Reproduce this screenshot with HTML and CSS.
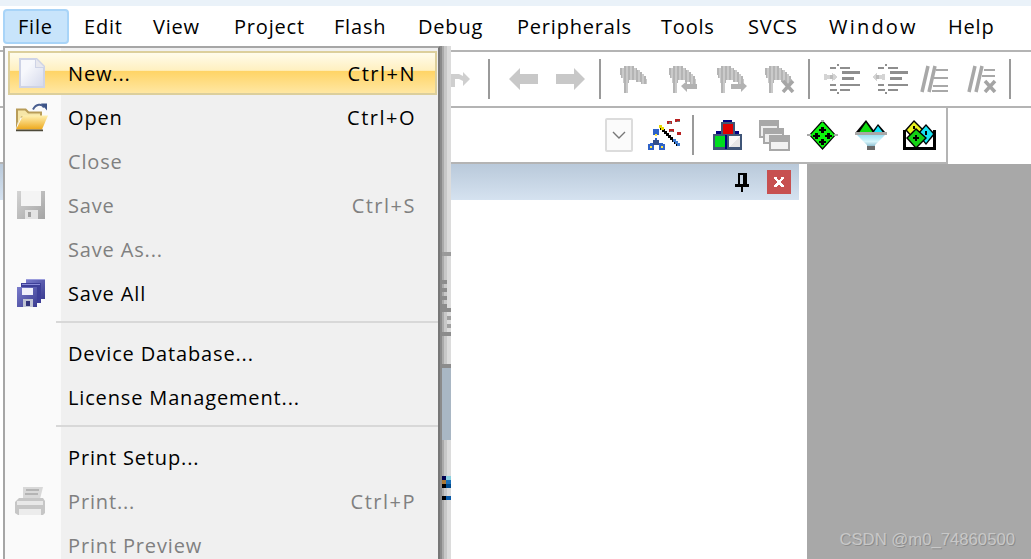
FILE: index.html
```html
<!DOCTYPE html>
<html lang="en">
<head>
<meta charset="utf-8">
<title>Keil File menu</title>
<link rel="stylesheet" href="styles.css">
</head>
<body>
<svg class="defs" width="0" height="0">
  <defs>
    <linearGradient id="pg" x1="0" y1="0" x2="1" y2="1"><stop offset=".3" stop-color="#f7f8fc"/><stop offset="1" stop-color="#d6daec"/></linearGradient>
    <linearGradient id="fd" x1="0" y1="0" x2="0" y2="1"><stop offset="0" stop-color="#fff0b0"/><stop offset="1" stop-color="#eda81c"/></linearGradient>
    <linearGradient id="fnl" x1="0" y1="0" x2="0" y2="1"><stop offset="0" stop-color="#9cdff2"/><stop offset=".6" stop-color="#d8f6fc"/><stop offset="1" stop-color="#8fc0d2"/></linearGradient>
    <linearGradient id="sv" x1="0" y1="0" x2="1" y2="1"><stop offset="0" stop-color="#d4d4d4"/><stop offset="1" stop-color="#a4a4a4"/></linearGradient>
    <linearGradient id="sa" x1="0" y1="0" x2="1" y2="1"><stop offset="0" stop-color="#7a7ccc"/><stop offset="1" stop-color="#3a3c90"/></linearGradient>
    <pattern id="dith" width="4" height="3" patternUnits="userSpaceOnUse"><rect width="4" height="3" fill="#cacaca"/><rect width="2" height="3" fill="#b4b4b4"/></pattern>
    <g id="flag"><path d="M0 3h4V1h10v2h3v2h3v2h2v2h2v2h2v3h1v5h-6v-2h-5v-2H9v3H8v10H4V18H3v-5H1v-3H0z" fill="url(#dith)" shape-rendering="crispEdges"/></g>
    <g id="lines1" fill="#8e8e8e"><path d="M15 0h2v2h-2zM8 3h6v2H8zM18 3h10v2H18zM20 7h18v3H20zM20 13h12v3H20zM8 20h6v2H8zM18 20h20v2H18zM8 25h7v2H8zM18 25h10v2H18zM15 28h2v2h-2z"/></g>
  </defs>
</svg>
<div class="app">
  <div class="strip"></div>
  <nav class="menubar">
    <span class="top active">File</span><span class="top">Edit</span><span class="top">View</span><span class="top">Project</span><span class="top">Flash</span><span class="top">Debug</span><span class="top">Peripherals</span><span class="top">Tools</span><span class="top">SVCS</span><span class="top wide">Window</span><span class="top">Help</span>
  </nav>
  <div class="bar1">
    <svg class="tb redo" width="22" height="24" viewBox="0 0 22 24"><path d="M0 7h9l4 2V5l7 7-7 7v-5l-4-2H5v8H1z" fill="#cfcfcf"/></svg>
    <i class="sep s1"></i>
    <svg class="tb back" width="29" height="24" viewBox="0 0 29 24"><path d="M0 12 11 1v6h18v10H11v6z" fill="#c8c8c8"/></svg>
    <svg class="tb fwd" width="29" height="24" viewBox="0 0 29 24"><path d="M29 12 18 1v6H0v10h18v6z" fill="#c8c8c8"/></svg>
    <i class="sep s2"></i>
    <svg class="tb f1" width="27" height="28" viewBox="0 0 27 28"><use href="#flag"/></svg>
    <svg class="tb f2" width="29" height="28" viewBox="0 0 29 28"><use href="#flag"/><path d="M12 21l6-5v3h10v5H18v3z" fill="#b2b2b2"/></svg>
    <svg class="tb f3" width="30" height="28" viewBox="0 0 30 28"><use href="#flag"/><path d="M30 21l-6-5v3H14v5h10v3z" fill="#b2b2b2"/></svg>
    <svg class="tb f4" width="30" height="28" viewBox="0 0 30 28"><use href="#flag"/><path d="M18 16l10 11m0-11L18 27" stroke="#a6a6a6" stroke-width="3.500"/></svg>
    <i class="sep s3"></i>
    <svg class="tb i1" width="38" height="30" viewBox="0 0 38 30" shape-rendering="crispEdges"><use href="#lines1"/><path d="M2 10h3v1h5V9l2 1 3 3-3 3-2 1v-2H5v1H2z" fill="#d4d4d4"/><path d="M8 11h3v4H8z" fill="#bcbcbc"/></svg>
    <svg class="tb i2" width="38" height="30" viewBox="0 0 38 30" shape-rendering="crispEdges"><use href="#lines1"/><path d="M15 10h-3v1H7V9l-2 1-3 3 3 3 2 1v-2h5v1h3z" fill="#d4d4d4"/><path d="M6 11h3v4H6z" fill="#bcbcbc"/></svg>
    <svg class="tb i3" width="30" height="28" viewBox="0 0 30 28"><path d="M3 27 9 1M10 27 16 1" stroke="#a8a8a8" stroke-width="3.500"/><path d="M17 5h12M15 13h14M14 21h15M13 26h16" stroke="#a8a8a8" stroke-width="2"/></svg>
    <svg class="tb i4" width="32" height="28" viewBox="0 0 32 28"><path d="M3 27 9 1M10 27 16 1" stroke="#a8a8a8" stroke-width="3.500"/><path d="M18 5h11M16 11h13" stroke="#a8a8a8" stroke-width="2"/><path d="M19 16l10 11m0-11L19 27" stroke="#a4a4a4" stroke-width="3.500"/></svg>
    <i class="sep s4"></i>
  </div>
  <div class="bar2-wrap">
    <div class="bar2">
      <span class="combo"><svg width="14" height="8" viewBox="0 0 14 8"><path d="M1 1l6 6 6-6" fill="none" stroke="#777" stroke-width="1.400"/></svg></span>
      <svg class="wand" width="34" height="32" viewBox="0 0 34 32" shape-rendering="crispEdges"><path d="M13 8h3v2h2v2h2v2h2v2h2v2h2v2h2v2h2v2h2v3h-3v-2h-2v-2h-2v-2h-2v-2h-2v-2h-2v-2h-2v-2h-2v-2h-2z" fill="#000"/><path d="M26 20h3v2h2v2h2v3h-3v-2h-2v-2h-2z" fill="#3a78d0"/><path d="M12 6h3v2h2v3h-3V9h-2z" fill="#e8d800"/><path d="M20 2h5v3h-5zM28 0h5v3h-5zM22 10h5v3h-5zM30 13h4v3h-4z" fill="#b82020"/><path d="M22 3h2v2h-2zM30 2h3v1h-3zM23 12h3v1h-3z" fill="#777"/><path d="M6 13h6v6H6zM1 28h6v6H1zM12 28h6v6h-6z" fill="#2e62c8" transform="translate(0 -3)"/><path d="M8 19h2v4H8zM3 24h5v2H3zM11 24h5v2h-5z" fill="#2e62c8"/><path d="M6 21h6v5H6z" fill="#334f88"/><path d="M8 15h2v2H8zM3 27h2v2H3zM14 27h2v2h-2z" fill="#ffe840"/></svg>
      <i class="sep s5"></i>
      <svg class="ic blocks" width="29" height="30" viewBox="0 0 29 30" shape-rendering="crispEdges"><path d="M10 0h9v2h-9z" fill="#000080"/><path d="M8 2h14v12H8z" fill="#3f5577"/><path d="M10 4h10v10H10z" fill="#e00000"/><path d="M3 11h5v3H3zM22 11h4v3h-4z" fill="#000080"/><path d="M0 14h29v16H0z" fill="#3f5577"/><path d="M2 16h10v11H2z" fill="#00dc20"/><path d="M12 15h2v14h-2z" fill="#000080"/><path d="M16 16h11v11H16z" fill="#e6e6e6"/><path d="M16 16h11l-11 11z" fill="#f6f6f6"/></svg>
      <svg class="ic wins" width="31" height="31" viewBox="0 0 31 31" shape-rendering="crispEdges"><path d="M0 0h20v18H0z" fill="#a8a8a8"/><path d="M2 6h16v10H2z" fill="#eeeeee"/><path d="M4 8h21v16H4z" fill="#a8a8a8"/><path d="M6 14h17v8H6z" fill="#eeeeee"/><path d="M10 15h21v16H10z" fill="#a8a8a8"/><path d="M12 22h17v7H12z" fill="#f2f2f2"/></svg>
      <svg class="ic dia" width="31" height="30" viewBox="0 0 31 30"><path d="M15.500 0 29 15 15.500 30 2 15z" fill="#000"/><path d="M0 14h4v2H0zM27 14h4v2h-4zM14 0h3v2h-3z" fill="#a8a8a8" shape-rendering="crispEdges"/><path d="M15.500 2 27.500 15 15.500 28 3.500 15z" fill="#0cf40c"/><path d="M14 7h3v2h2v2h-2v2h-3v-2h-2V9h2zM8 13h3v2h2v2h-2v2H8v-2H6v-2h2zM20 13h3v2h2v2h-2v2h-3v-2h-2v-2h2zM14 19h3v2h2v2h-2v2h-3v-2h-2v-2h2z" fill="#000" shape-rendering="crispEdges"/></svg>
      <svg class="ic fun" width="32" height="30" viewBox="0 0 32 30" shape-rendering="crispEdges"><path d="M11 0 20 12H1z" fill="#000" shape-rendering="auto"/><path d="M11 2.500 17.500 12H4.500z" fill="#10dc10" shape-rendering="auto"/><path d="M23 4 30 12H17z" fill="#000" shape-rendering="auto"/><path d="M23 6 27.500 12H19z" fill="#18e4f8" shape-rendering="auto"/><path d="M0 12h32v3H0z" fill="#a8a8a8"/><path d="M2 15h28L20 25v1h-8v-1z" fill="url(#fnl)" shape-rendering="auto"/><path d="M12 26h8v4h-8z" fill="#6a6a6a"/></svg>
      <svg class="ic multi" width="33" height="30" viewBox="0 0 33 30" shape-rendering="crispEdges"><path d="M0 10h3v17h27V10h3v20H0z" fill="#000"/><path d="M11 0 21 10 11 20 2 10z" fill="#000" shape-rendering="auto"/><path d="M11 2 19 10 11 18 4 10z" fill="#e8f020" shape-rendering="auto"/><path d="M23 4 32 14 23 25 14 14z" fill="#000" shape-rendering="auto"/><path d="M23 6 30 14 23 23 16 14z" fill="#18e4f4" shape-rendering="auto"/><path d="M13 8 24 18 13 29 3 18z" fill="#000" shape-rendering="auto"/><path d="M13 10 22 18 13 27 5 18z" fill="#14d214" shape-rendering="auto"/><path d="M12 15h2v6h-2zM10 17h6v2h-6zM22 11h2v4h-2zM10 6h2v3h-2z" fill="#000"/></svg>
    </div>
    <div class="bar2-rest"></div>
  </div>
  <main class="body">
    <section class="panel">
      <header class="panel-head">
        <svg class="pin" width="14" height="20" viewBox="0 0 14 20" shape-rendering="crispEdges"><path d="M3 1h9v11h2v3H0v-3h3zM5 3v9h3V3z" fill="#000"/><path d="M6 15h2v5H6z" fill="#000"/></svg>
        <span class="close"><svg width="10" height="10" viewBox="0 0 10 10" shape-rendering="crispEdges"><path d="M0 0h3v2h1v1h2V2h1V0h3v2H9v1H8v1H7v2h1v1h1v1h1v2H7V9H6V8H4v1H3v1H0V8h1V7h1V6h1V4H2V3H1V2H0z" fill="#fff"/></svg></span>
      </header>
    </section>
    <div class="workspace">
      <span class="mark">CSDN @m0_74860500</span>
    </div>
  </main>
</div>

<div class="shadow">
  <i class="sh t1"></i><i class="sh t2"></i><i class="sh t3"></i><i class="sh t3a"></i><i class="sh t3b"></i><i class="sh t4"></i><i class="sh t5"></i><i class="sh t6"></i>
</div>

<div class="dropdown">
  <div class="item hot">
    <svg class="mi m-new" width="26" height="30" viewBox="0 0 26 30"><path d="M0 0h18l8 8v22H0z" fill="#ced3e6"/><path d="M2 2h14v8h8v18H2z" fill="url(#pg)"/><path d="M17 1l8 8h-8z" fill="#e8e8ee"/></svg>
    <span class="lbl">New...</span><span class="key">Ctrl+N</span>
  </div>
  <div class="item">
    <svg class="mi m-open" width="33" height="29" viewBox="0 0 33 29"><path d="M1 6h10l3 3h13v6H4L1 27z" fill="#b89c58"/><path d="M3 8h7l3 3h12v3H6l-3 8z" fill="#f6e6a8"/><path d="M8 13h25l-6 14H1z" fill="url(#fd)"/><path d="M1 27h27v2H1z" fill="#4e4a3a"/><path d="M18 7c3-6 9-6 11-2" fill="none" stroke="#4a5f90" stroke-width="2"/><path d="M26 1h6v7z" fill="#3c5488"/></svg>
    <span class="lbl">Open</span><span class="key">Ctrl+O</span>
  </div>
  <div class="item off"><span class="lbl">Close</span></div>
  <div class="item off">
    <svg class="mi m-save" width="28" height="28" viewBox="0 0 28 28" shape-rendering="crispEdges"><path d="M0 0h28v28H0z" fill="url(#sv)"/><path d="M4 0h20v15H4z" fill="#f4f4f4"/><path d="M8 19h13v9H8z" fill="#e4e4e4"/><path d="M11 21h3v5h-3z" fill="#a0a0a0"/></svg>
    <span class="lbl">Save</span><span class="key">Ctrl+S</span>
  </div>
  <div class="item off"><span class="lbl">Save As...</span></div>
  <div class="item">
    <svg class="mi m-save" width="28" height="28" viewBox="0 0 28 28" shape-rendering="crispEdges"><path d="M9 0h19v20H9z" fill="url(#sa)"/><path d="M9 0h19v1H9z" fill="#9a9cdc"/><path d="M4 4h20v20H4z" fill="#3e3f98"/><path d="M5 5h18v1H5z" fill="#8a8cd8"/><path d="M0 8h20v20H0z" fill="url(#sa)"/><path d="M5 9h11v7H5z" fill="#f0f0fa"/><path d="M6 20h10v8H6z" fill="#c0c4d4"/><path d="M9 22h4v5H9z" fill="#33357a"/></svg>
    <span class="lbl">Save All</span>
  </div>
  <div class="rule"></div>
  <div class="item"><span class="lbl">Device Database...</span></div>
  <div class="item"><span class="lbl">License Management...</span></div>
  <div class="rule"></div>
  <div class="item"><span class="lbl">Print Setup...</span></div>
  <div class="item off">
    <svg class="mi m-open" width="30" height="28" viewBox="0 0 30 28"><path d="M8 0h20l-3 12H8z" fill="#d8d8d8"/><path d="M11 3h13M10 7h13" stroke="#a8a8a8" stroke-width="1.500"/><path d="M4 11h24l2 3v12l-2 2H3l-3-2V15z" fill="#c6c6c6"/><path d="M2 14h26v4H2z" fill="#e8e8e8"/><path d="M4 22h22v6H4z" fill="#ececec"/></svg>
    <span class="lbl">Print...</span><span class="key">Ctrl+P</span>
  </div>
  <div class="item off"><span class="lbl">Print Preview</span></div>
</div>
</body>
</html>
```

FILE: styles.css
```css
* { box-sizing: border-box; }
html, body { margin: 0; padding: 0; width: 1031px; height: 559px; overflow: hidden; background: #fff; }
body { font-family: "Open Sans", "Noto Sans", sans-serif; color: #000; position: relative; }
svg, i { display: block; flex: none; }
.defs { position: absolute; }

.app { display: flex; flex-direction: column; height: 559px; }
.strip { height: 6px; background: #eaf2f9; }

.menubar { height: 44px; background: #fff; display: grid; grid-template-columns: 66px 69px 81px 100px 84px 99px 144px 87px 81px 119px 62px; align-items: start; padding: 3px 0 0 3px; font-size: 20px; letter-spacing: .8px; }
.top { height: 35px; line-height: 31px; padding-left: 13px; white-space: nowrap; border: 2px solid transparent; border-radius: 4px; }
.top.active { background: #c8e4fb; border-color: #a8d4f8; }
.top.wide { letter-spacing: 2.2px; }

.bar1 { height: 58px; border-top: 2px solid #b4b4b4; border-bottom: 2px solid #b4b4b4; background: #fff; display: flex; align-items: center; padding-left: 450px; }
.sep { width: 2px; background: #9a9a9a; }
.bar1 .sep { height: 40px; }
.redo { margin-right: 16px; }
.s1 { margin-right: 19px; }
.back { margin-right: 18px; }
.fwd { margin-right: 14px; }
.s2 { margin-right: 19px; }
.f1 { margin-right: 22px; }
.f2 { margin-right: 19px; }
.f3 { margin-right: 18px; }
.f4 { margin-right: 13px; }
.s3 { margin-right: 12px; }
.i1 { margin-right: 10px; }
.i2 { margin-right: 11px; }
.i3 { margin-right: 17px; }
.i4 { margin-right: 11px; }

.bar2-wrap { height: 56px; display: flex; background: #fff; }
.bar2 { width: 948px; height: 56px; border-right: 2px solid #b4b4b4; border-bottom: 2px solid #b4b4b4; display: flex; align-items: center; padding-left: 605px; }
.bar2-rest { flex: 1; }
.combo { width: 28px; height: 34px; border: 2px solid #dcdcdc; border-radius: 2px; background: #fbfbfb; display: flex; align-items: center; justify-content: center; margin-right: 14px; }
.wand { margin-right: 11px; }
.bar2 .sep { height: 40px; margin-right: 19px; }
.blocks { margin-right: 17px; }
.wins { margin-right: 17px; }
.dia { margin-right: 17px; }
.fun { margin-right: 16px; }

.body { flex: 1; display: flex; min-height: 0; }
.panel { width: 807px; background: #fff; }
.panel-head { width: 799px; height: 36px; background: linear-gradient(#b9c9da, #d5e2f0); display: flex; align-items: center; justify-content: flex-end; padding-right: 8px; }
.pin { margin-right: 18px; }
.close { width: 24px; height: 24px; background: #c75050; display: flex; align-items: center; justify-content: center; }
.workspace { flex: 1; background: #a8a8a8; display: flex; align-items: flex-end; justify-content: flex-end; padding: 0 16px 9px 0; }
.mark { font-family: "Liberation Sans", Arial, sans-serif; font-size: 16.7px; color: #c8c8c8; text-shadow: 1px 1px 0 #8c8c8c; white-space: nowrap; }

.dropdown { position: absolute; left: 3px; top: 46px; width: 437px; height: 520px; background: linear-gradient(90deg, #fafafa 0 56px, #f0f0f0 56px); border: 2px solid #a6a6a6; border-right-color: #777; border-bottom: 0; padding: 3px 1px 0 3px; }
.item { height: 44px; display: flex; align-items: center; position: relative; padding: 0 21px 0 60px; font-size: 20px; letter-spacing: .85px; white-space: nowrap; }
.item.off { color: #808080; }
.item.hot { background: linear-gradient(#fffdf0 0, #fff0c0 44%, #ffd466 46%, #ffe9a8 100%); box-shadow: inset 0 0 0 2px #dccf9c; }
.lbl { flex: 1; }
.key { letter-spacing: 1.5px; }
.mi { position: absolute; top: 50%; transform: translateY(-50%); }
.m-new { left: 11px; }
.m-open { left: 7px; }
.m-save { left: 9px; }
.rule { height: 2px; background: #d8d8d8; margin: 6px -1px 8px 48px; }

.shadow { position: absolute; left: 440px; top: 46px; width: 11px; height: 513px; background: linear-gradient(90deg, #8a8a8a 0 2px, #aaa 2px 4px, #c8c8c8 4px 7px, #dcdcdc 7px 11px); display: flex; flex-direction: column; align-items: flex-start; }
.sh { width: 9px; margin-left: 2px; display: block; }
.t1 { height: 4px; margin-top: 206px; background: #9a9a9a; }
.t2 { height: 4px; margin-top: 24px; width: 5px; background: #8c8c8c; box-shadow: 0 8px #8c8c8c, 0 16px #8c8c8c, 0 24px #8c8c8c; }
.t3 { height: 4px; margin-top: 24px; background: #8c8c8c; }
.t3a { height: 4px; margin: 4px 0 0 7px; width: 4px; background: #a0a0a0; box-shadow: 0 8px #a0a0a0; }
.t3b { height: 4px; margin-top: 12px; background: #8c8c8c; }
.t4 { height: 76px; margin-top: 28px; background: #a9b7c4; border-top: 4px solid #8c8c8c; }
.t5 { height: 12px; margin-top: 36px; background: linear-gradient(#000050 33%, #a87838 33% 66%, #000 66%) left / 4px 100% no-repeat, linear-gradient(#8ad0e0 33%, #1a70b8 33% 66%, #004c90 66%); }
.t6 { height: 4px; margin-top: 8px; background: linear-gradient(90deg, #000 0 4px, #0a5aa8 4px); }
```
